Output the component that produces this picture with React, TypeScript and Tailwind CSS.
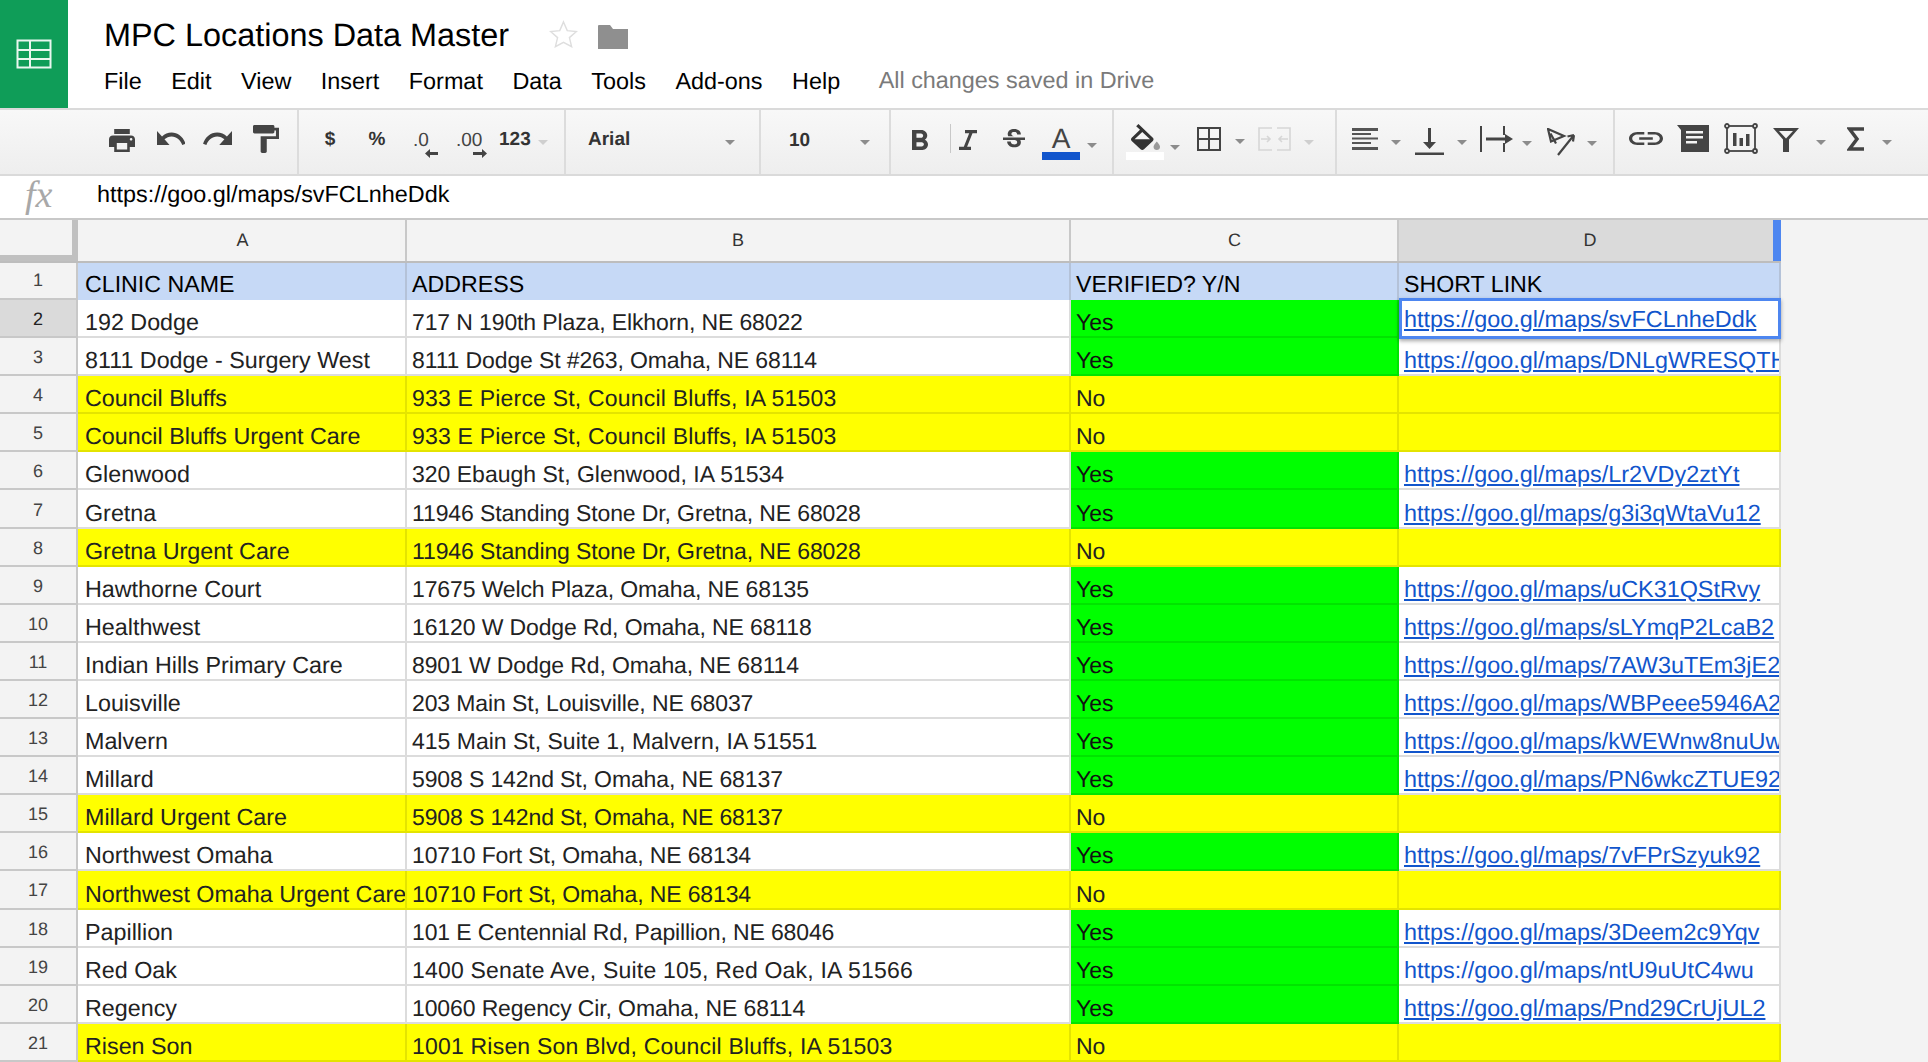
import React from "react";

const rows: [string, string, "Yes" | "No", string][] = [
  ["192 Dodge", "717 N 190th Plaza, Elkhorn, NE 68022", "Yes", "https://goo.gl/maps/svFCLnheDdk"],
  ["8111 Dodge - Surgery West", "8111 Dodge St #263, Omaha, NE 68114", "Yes", "https://goo.gl/maps/DNLgWRESQTH2"],
  ["Council Bluffs", "933 E Pierce St, Council Bluffs, IA 51503", "No", ""],
  ["Council Bluffs Urgent Care", "933 E Pierce St, Council Bluffs, IA 51503", "No", ""],
  ["Glenwood", "320 Ebaugh St, Glenwood, IA 51534", "Yes", "https://goo.gl/maps/Lr2VDy2ztYt"],
  ["Gretna", "11946 Standing Stone Dr, Gretna, NE 68028", "Yes", "https://goo.gl/maps/g3i3qWtaVu12"],
  ["Gretna Urgent Care", "11946 Standing Stone Dr, Gretna, NE 68028", "No", ""],
  ["Hawthorne Court", "17675 Welch Plaza, Omaha, NE 68135", "Yes", "https://goo.gl/maps/uCK31QStRvy"],
  ["Healthwest", "16120 W Dodge Rd, Omaha, NE 68118", "Yes", "https://goo.gl/maps/sLYmqP2LcaB2"],
  ["Indian Hills Primary Care", "8901 W Dodge Rd, Omaha, NE 68114", "Yes", "https://goo.gl/maps/7AW3uTEm3jE2"],
  ["Louisville", "203 Main St, Louisville, NE 68037", "Yes", "https://goo.gl/maps/WBPeee5946A2"],
  ["Malvern", "415 Main St, Suite 1, Malvern, IA 51551", "Yes", "https://goo.gl/maps/kWEWnw8nuUw"],
  ["Millard", "5908 S 142nd St, Omaha, NE 68137", "Yes", "https://goo.gl/maps/PN6wkcZTUE92"],
  ["Millard Urgent Care", "5908 S 142nd St, Omaha, NE 68137", "No", ""],
  ["Northwest Omaha", "10710 Fort St, Omaha, NE 68134", "Yes", "https://goo.gl/maps/7vFPrSzyuk92"],
  ["Northwest Omaha Urgent Care", "10710 Fort St, Omaha, NE 68134", "No", ""],
  ["Papillion", "101 E Centennial Rd, Papillion, NE 68046", "Yes", "https://goo.gl/maps/3Deem2c9Yqv"],
  ["Red Oak", "1400 Senate Ave, Suite 105, Red Oak, IA 51566", "Yes", "https://goo.gl/maps/ntU9uUtC4wu"],
  ["Regency", "10060 Regency Cir, Omaha, NE 68114", "Yes", "https://goo.gl/maps/Pnd29CrUjUL2"],
  ["Risen Son", "1001 Risen Son Blvd, Council Bluffs, IA 51503", "No", ""],
];

const Sep = ({ c }: { c: string }) => <div className={`w-[2px] h-[64px] bg-[#dcdcdc] ${c}`} />;

const Caret = ({ c, light }: { c: string; light?: boolean }) => (
  <svg className={c} width="10" height="5" viewBox="0 0 10 5">
    <path d="M0 0h10L5 5z" fill={light ? "#cfcfcf" : "#8c8c8c"} />
  </svg>
);

const Cell = ({ c, children }: { c: string; children?: React.ReactNode }) => (
  <div className={`h-full shrink-0 flex items-end overflow-hidden whitespace-nowrap leading-[28px] ${c}`}>
    {children}
  </div>
);

export default function App() {
  return (
    <div className="w-[1928px] h-[1062px] overflow-hidden bg-white text-black [text-rendering:geometricPrecision] font-['Liberation_Sans',Arial,sans-serif]">
      <header className="flex h-[108px]">
        <div className="w-[68px] h-[108px] bg-[#0f9d58] flex items-center justify-center">
          <svg width="36" height="30" viewBox="0 0 36 30" fill="none" stroke="#e9f7ef" strokeWidth="2">
            <rect x="1.5" y="1.5" width="33" height="27" />
            <path d="M1.5 11H34.5M1.5 20H34.5M14 1.5V28.5" />
          </svg>
        </div>
        <div className="pl-[36px] flex flex-col">
          <div className="h-[68px] flex items-center">
            <span className="text-[32.4px] leading-none mt-[2px]">MPC Locations Data Master</span>
            <svg className="ml-[40px]" width="29" height="28" viewBox="0 0 24 23" fill="none" stroke="#dedede" strokeWidth="1.2">
              <path d="M12 1.5l3.1 7.2 7.6.7-5.8 5.1 1.8 7.5L12 18.4l-6.7 3.6 1.8-7.5L1.3 9.4l7.6-.7z" />
            </svg>
            <svg className="ml-[20px] mt-[4px]" width="30" height="25" viewBox="0 0 30 25">
              <path d="M0 2a1 1 0 0 1 1-1h11l3 4h15v20H0z" fill="#8f8f8f" />
            </svg>
          </div>
          <nav className="h-[28px] flex items-center gap-[29.5px] text-[23.4px] leading-none">
            <span>File</span>
            <span>Edit</span>
            <span>View</span>
            <span>Insert</span>
            <span>Format</span>
            <span>Data</span>
            <span>Tools</span>
            <span>Add-ons</span>
            <span>Help</span>
            <span className="ml-[9px] text-[#7a7a7a] mt-[-3px]">All changes saved in Drive</span>
          </nav>
        </div>
      </header>

      <div className="h-[68px] border-y-2 border-[#dadada] bg-gradient-to-b from-[#f8f8f8] to-[#eeeeee] flex items-start text-[#333] font-bold text-[19px] leading-none">
        <svg className="ml-[109px] mt-[19px]" width="26" height="23" viewBox="2 3 20 18" preserveAspectRatio="none" fill="#444">
          <path d="M19 8H5c-1.66 0-3 1.34-3 3v6h4v4h12v-4h4v-6c0-1.66-1.34-3-3-3zm-3 11H8v-5h8v5zm3-7c-.55 0-1-.45-1-1s.45-1 1-1 1 .45 1 1-.45 1-1 1zm-1-9H6v4h12V3z" />
        </svg>
        <svg className="ml-[22px] mt-[21px]" width="28" height="14" viewBox="2 7 20.1 9" preserveAspectRatio="none" fill="#444">
          <path d="M12.5 8c-2.65 0-5.05.99-6.9 2.6L2 7v9h9l-3.62-3.62c1.39-1.16 3.16-1.88 5.12-1.88 3.54 0 6.55 2.31 7.6 5.5l2.37-.78C21.08 11.03 17.15 8 12.5 8z" />
        </svg>
        <svg className="ml-[18px] mt-[21px]" width="29" height="14" viewBox="1.5 7 20.5 9" preserveAspectRatio="none" fill="#444">
          <path d="M18.4 10.6C16.55 8.99 14.15 8 11.5 8c-4.65 0-8.58 3.03-9.96 7.22L3.9 16c1.05-3.19 4.05-5.5 7.6-5.5 1.95 0 3.73.72 5.12 1.88L13 16h9V7l-3.6 3.6z" />
        </svg>
        <svg className="ml-[21px] mt-[15px]" width="26" height="28" viewBox="4 2 17 20" preserveAspectRatio="none" fill="#444">
          <path d="M18 4V3c0-.55-.45-1-1-1H5c-.55 0-1 .45-1 1v4c0 .55.45 1 1 1h12c.55 0 1-.45 1-1V6h1v4H9v11c0 .55.45 1 1 1h2c.55 0 1-.45 1-1v-9h8V4h-3z" />
        </svg>
        <Sep c="ml-[18px]" />
        <span className="ml-[25px] mt-[20px] w-[12px] text-center">$</span>
        <span className="ml-[32px] mt-[20px] w-[18px] text-center">%</span>
        <div className="ml-[27px] mt-[21px] w-[25px] flex flex-col font-normal text-[#444]">
          <span className="text-[19px]">.0</span>
          <svg className="self-end mt-[-1px]" width="13" height="9" viewBox="0 0 13 9" fill="#444">
            <path d="M0 4.500L5 0v3h8v3H5v3z" />
          </svg>
        </div>
        <div className="ml-[18px] mt-[21px] w-[31px] flex flex-col font-normal text-[#444]">
          <span className="text-[19px]">.00</span>
          <svg className="self-end mt-[-1px]" width="14" height="9" viewBox="0 0 14 9" fill="#444">
            <path d="M14 4.500L9 0v3H0v3h9v3z" />
          </svg>
        </div>
        <span className="ml-[12px] mt-[20px] w-[32px]">123</span>
        <Caret c="ml-[7px] mt-[30px]" light />
        <Sep c="ml-[16px]" />
        <span className="ml-[22px] mt-[20px] w-[42px]">Arial</span>
        <Caret c="ml-[95px] mt-[30px]" />
        <Sep c="ml-[24px]" />
        <span className="ml-[28px] mt-[21px] w-[21px]">10</span>
        <Caret c="ml-[50px] mt-[30px]" />
        <Sep c="ml-[19px]" />
        <svg className="ml-[21px] mt-[20px]" width="16" height="20" viewBox="7 4 10.75 14" preserveAspectRatio="none" fill="#444">
          <path d="M15.6 10.79c.97-.67 1.65-1.77 1.65-2.79 0-2.26-1.75-4-4-4H7v14h7.04c2.09 0 3.71-1.7 3.71-3.79 0-1.52-.86-2.82-2.15-3.42zM10 6.5h3c.83 0 1.5.67 1.5 1.5s-.67 1.5-1.5 1.5h-3v-3zm3.5 9H10v-3h3.5c.83 0 1.5.67 1.5 1.5s-.67 1.5-1.5 1.5z" />
        </svg>
        <div className="ml-[22px] mt-[14px] w-px h-[29px] bg-[#c8c8c8]" />
        <svg className="ml-[8px] mt-[20px]" width="18" height="20" viewBox="6 4 12 14" preserveAspectRatio="none" fill="#444">
          <path d="M10 4v2.2h2.8l-3.6 9.6H6V18h8v-2.2h-2.6l3.6-9.6H18V4z" />
        </svg>
        <svg className="ml-[26px] mt-[19px]" width="22" height="22" viewBox="3 3 18 18" fill="#444">
          <path d="M7.24 8.75c-.26-.48-.39-1.03-.39-1.67 0-.61.13-1.16.4-1.67.26-.5.63-.93 1.11-1.29.48-.35 1.05-.63 1.7-.83.66-.19 1.39-.29 2.18-.29.81 0 1.54.11 2.21.34.66.22 1.23.54 1.69.94.47.4.83.88 1.08 1.43.25.55.38 1.15.38 1.81h-3.01c0-.31-.05-.59-.15-.85-.09-.27-.24-.49-.44-.68-.2-.19-.45-.33-.75-.44-.3-.1-.66-.16-1.06-.16-.39 0-.74.04-1.03.13-.29.09-.53.21-.72.36-.19.16-.34.34-.44.55-.1.21-.15.43-.15.66 0 .48.25.88.74 1.21.38.25.77.48 1.41.7H7.39c-.05-.08-.11-.17-.15-.25zM21 12v-2H3v2h9.62c.18.07.4.14.55.2.37.17.66.34.87.51.21.17.35.36.43.57.07.2.11.43.11.69 0 .23-.05.45-.14.66-.09.2-.23.38-.42.53-.19.15-.42.26-.71.35-.29.08-.63.13-1.01.13-.43 0-.83-.04-1.18-.13s-.66-.23-.91-.42c-.25-.19-.45-.44-.59-.75-.14-.31-.25-.76-.25-1.21H6.4c0 .55.08 1.13.24 1.58.16.45.37.85.65 1.21.28.35.6.66.98.92.37.26.78.48 1.22.65.44.17.9.3 1.38.39.48.08.96.13 1.44.13.8 0 1.53-.09 2.18-.28s1.21-.45 1.67-.79c.46-.34.82-.77 1.07-1.27s.38-1.07.38-1.71c0-.6-.1-1.14-.31-1.61-.05-.11-.11-.23-.17-.33H21z" />
        </svg>
        <div className="ml-[17px] w-[38px] flex flex-col items-center font-normal text-[#444]">
          <span className="text-[28px] leading-none mt-[15px] h-[27px]">A</span>
          <div className="w-[38px] h-[8px] bg-[#1155cc]" />
        </div>
        <Caret c="ml-[7px] mt-[33px]" />
        <Sep c="ml-[15px]" />
        <div className="ml-[12px] w-[38px] flex flex-col items-center">
          <svg className="mt-[14px]" width="29" height="26" viewBox="3 0 18 17" preserveAspectRatio="none">
            <path fill="#333" d="M16.56 8.94L7.62 0 6.21 1.41l2.38 2.38-5.15 5.15c-.59.59-.59 1.54 0 2.12l5.5 5.5c.29.29.68.44 1.06.44s.77-.15 1.06-.44l5.5-5.5c.59-.58.59-1.53 0-2.12zM5.21 10L10 5.21 14.79 10H5.21z" />
            <path fill="#999" d="M19 11.5s-2 2.17-2 3.5c0 1.1.9 2 2 2s2-.9 2-2c0-1.33-2-3.5-2-3.5z" />
          </svg>
          <div className="w-[38px] h-[8px] bg-white mt-[2px]" />
        </div>
        <Caret c="ml-[6px] mt-[35px]" />
        <svg className="ml-[17px] mt-[17px]" width="24" height="24" viewBox="0 0 24 24" fill="none" stroke="#444" strokeWidth="2">
          <rect x="1" y="1" width="22" height="22" />
          <path d="M12 1V23M1 12H23" />
        </svg>
        <Caret c="ml-[14px] mt-[29px]" />
        <svg className="ml-[13px] mt-[17px]" width="33" height="24" viewBox="0 0 33 24" fill="none" stroke="#d6d6d6" strokeWidth="1.6">
          <path d="M14 1H1V23H14M19 1H32V23H19" />
          <path d="M3 12H12M9 9l3 3-3 3M30 12H21M24 9l-3 3 3 3" />
        </svg>
        <Caret c="ml-[13px] mt-[30px]" light />
        <Sep c="ml-[21px]" />
        <svg className="ml-[15px] mt-[18px]" width="26" height="22" viewBox="0 0 26 22" fill="#555">
          <path d="M0 0h26v3H0zM0 5h19v2H0zM0 9.500h26v2H0zM0 14h19v2H0zM0 19h26v3H0z" />
        </svg>
        <Caret c="ml-[13px] mt-[30px]" />
        <svg className="ml-[14px] mt-[18px]" width="29" height="27" viewBox="0 0 29 27" fill="#444">
          <path d="M13 0h3v14h5l-6.500 7L8 14h5zM0 24.500h29V27H0z" />
        </svg>
        <Caret c="ml-[13px] mt-[30px]" />
        <svg className="ml-[13px] mt-[16px]" width="33" height="26" viewBox="0 0 33 26" fill="#444">
          <path d="M0 0h2v26H0zM23 0h2v9h-2zM23 17h2v9h-2zM6 11.500h19V8l8 5-8 5v-3.500H6z" />
        </svg>
        <Caret c="ml-[9px] mt-[31px]" />
        <svg className="ml-[15px] mt-[18px]" width="28" height="28" viewBox="0 0 28 28" fill="none" stroke="#444" strokeWidth="2.2">
          <path d="M1 1L17 8 4 13.500zM3.500 5.500L9 15.500M27 7L11 27M27 7l-6.500 1.500M27 7l-1 6.500" />
        </svg>
        <Caret c="ml-[12px] mt-[31px]" />
        <Sep c="ml-[16px]" />
        <svg className="ml-[14px] mt-[22px]" width="34" height="13" viewBox="2 7 20 10" preserveAspectRatio="none" fill="#444">
          <path d="M3.900 12c0-1.710 1.390-3.100 3.100-3.100h4V7H7c-2.760 0-5 2.240-5 5s2.240 5 5 5h4v-1.900H7c-1.710 0-3.100-1.390-3.100-3.100zM8 13h8v-2H8v2zm9-6h-4v1.900h4c1.710 0 3.100 1.390 3.100 3.100s-1.390 3.100-3.100 3.100h-4V17h4c2.760 0 5-2.240 5-5s-2.240-5-5-5z" />
        </svg>
        <svg className="ml-[14px] mt-[15px]" width="32" height="27" viewBox="0 0 32 27">
          <path d="M0 0H32V27H4V5z" fill="#444" />
          <path d="M9 6h17v2.500H9zM9 11h17v2.500H9zM9 16h11v2.500H9z" fill="#f3f3f3" />
        </svg>
        <svg className="ml-[15px] mt-[13px]" width="34" height="31" viewBox="0 0 34 31" fill="none" stroke="#444" strokeWidth="1.800">
          <rect x="3" y="3" width="28" height="25" />
          <circle cx="3" cy="3" r="2" fill="#f3f3f3" />
          <circle cx="31" cy="3" r="2" fill="#f3f3f3" />
          <circle cx="3" cy="28" r="2" fill="#f3f3f3" />
          <circle cx="31" cy="28" r="2" fill="#f3f3f3" />
          <path d="M9 10h3.500v13H9zM15.500 15H19v8h-3.500zM22 11h3.500v12H22z" fill="#444" stroke="none" />
        </svg>
        <svg className="ml-[15px] mt-[18px]" width="26" height="24" viewBox="0 0 26 24">
          <path d="M0 0H26L16 11.500V24H10V11.500zM6 3l7 7.500L20 3z" fill="#444" fillRule="evenodd" />
        </svg>
        <Caret c="ml-[17px] mt-[30px]" />
        <svg className="ml-[21px] mt-[17px]" width="17" height="24" viewBox="0 0 17 24" fill="none" stroke="#444" strokeWidth="3.500">
          <path d="M17 2H2.500L10 12 2.500 22H17" />
        </svg>
        <Caret c="ml-[18px] mt-[30px]" />
      </div>

      <div className="h-[42px] flex items-center">
        <span className="ml-[25px] w-[72px] text-[38px] leading-none italic text-[#a8a8a8] font-['Liberation_Serif',serif] mt-[-4px]">fx</span>
        <span className="text-[23.4px] leading-none mt-[-4px]">https://goo.gl/maps/svFCLnheDdk</span>
      </div>

      <div className="h-[844px] bg-[#f3f3f3] border-t-2 border-[#c8c8c8]">
        <div className="w-[1781px] flex flex-col">
          <div className="h-[43px] flex text-[18px] text-[#333] border-b-2 border-[#bdbdbd]">
            <div className="w-[78px] border-r-[6px] border-b-[6px] border-[#c0c0c0]" />
            <div className="w-[329px] pl-[2px] border-r-2 border-[#c8c8c8] flex items-center justify-center">A</div>
            <div className="w-[664px] border-r-2 border-[#c8c8c8] flex items-center justify-center">B</div>
            <div className="w-[328px] pl-[1px] border-r-2 border-[#c8c8c8] flex items-center justify-center">C</div>
            <div className="w-[382px] pl-[8px] bg-[#dadada] border-r-[8px] border-[#4d86f0] flex items-center justify-center">D</div>
          </div>
          <div className="h-[37px] flex text-[23.2px]">
            <div className="w-[78px] h-full border-r-2 border-b-2 border-[#c8c8c8] flex items-center justify-center text-[18px] text-[#444]">1</div>
            <Cell c="w-[329px] pl-[7px] pb-[2px] bg-[#c6d9f6] border-r-2 border-[#b4c2d8]">CLINIC NAME</Cell>
            <Cell c="w-[664px] pl-[5px] pb-[2px] bg-[#c6d9f6] border-r-2 border-[#b4c2d8]">ADDRESS</Cell>
            <Cell c="w-[328px] pl-[5px] pb-[2px] bg-[#c6d9f6] border-r-2 border-[#b4c2d8]">VERIFIED? Y/N</Cell>
            <Cell c="w-[382px] pl-[5px] pb-[2px] bg-[#c6d9f6] border-r-2 border-[#b4c2d8]">SHORT LINK</Cell>
          </div>
          {rows.map(([name, addr, ok, link], i) => {
            const yes = ok === "Yes";
            const base = yes
              ? "bg-white border-r-2 border-b-2 border-[#dcdcdc] text-[#222]"
              : "bg-[#ffff00] border-r-2 border-b-2 border-[#e4e400] text-[#222]";
            const green = "bg-[#00ff00] border-r-2 border-b-2 border-[#00e400] text-[#111]";
            const addrTrack = addr.includes("Bluffs") || addr.includes("Senate") ? "tracking-[0.2px]" : addr.includes(", NE ") ? "tracking-[-0.12px]" : "";
            return (
              <div key={i} className="h-[38.1px] flex text-[23px]">
                <div className={`w-[78px] h-full pt-[3px] border-r-2 border-b-2 border-[#c8c8c8] flex items-center justify-center text-[18px] ${i === 0 ? "bg-[#dadada] text-[#222]" : "text-[#444]"}`}>
                  {i + 2}
                </div>
                <Cell c={`w-[329px] pl-[7px] text-[23.3px] ${base}`}>{name}</Cell>
                <Cell c={`w-[664px] pl-[5px] ${addrTrack} ${base}`}>{addr}</Cell>
                <Cell c={`w-[328px] pl-[5px] ${yes ? green : base}`}>{ok}</Cell>
                {i === 0 ? (
                  <div className="w-[382px] h-full shrink-0 relative z-10 bg-white pl-[5px] flex items-end whitespace-nowrap leading-[28px] text-[23.4px]">
                    <span className="mb-[5px] text-[#1155cc] underline">{link}</span>
                    <div className="absolute left-0 right-[0px] top-[-2px] bottom-[-1px] border-[3px] border-[#4d86f0] shadow-[0_2px_4px_rgba(0,0,0,0.35)]" />
                  </div>
                ) : (
                  <Cell c={`w-[382px] pl-[5px] text-[23.4px] ${base}`}>
                    <span className={`text-[#1155cc] ${i === 17 ? "" : "underline"}`}>{link}</span>
                  </Cell>
                )}
              </div>
            );
          })}
        </div>
      </div>
    </div>
  );
}
